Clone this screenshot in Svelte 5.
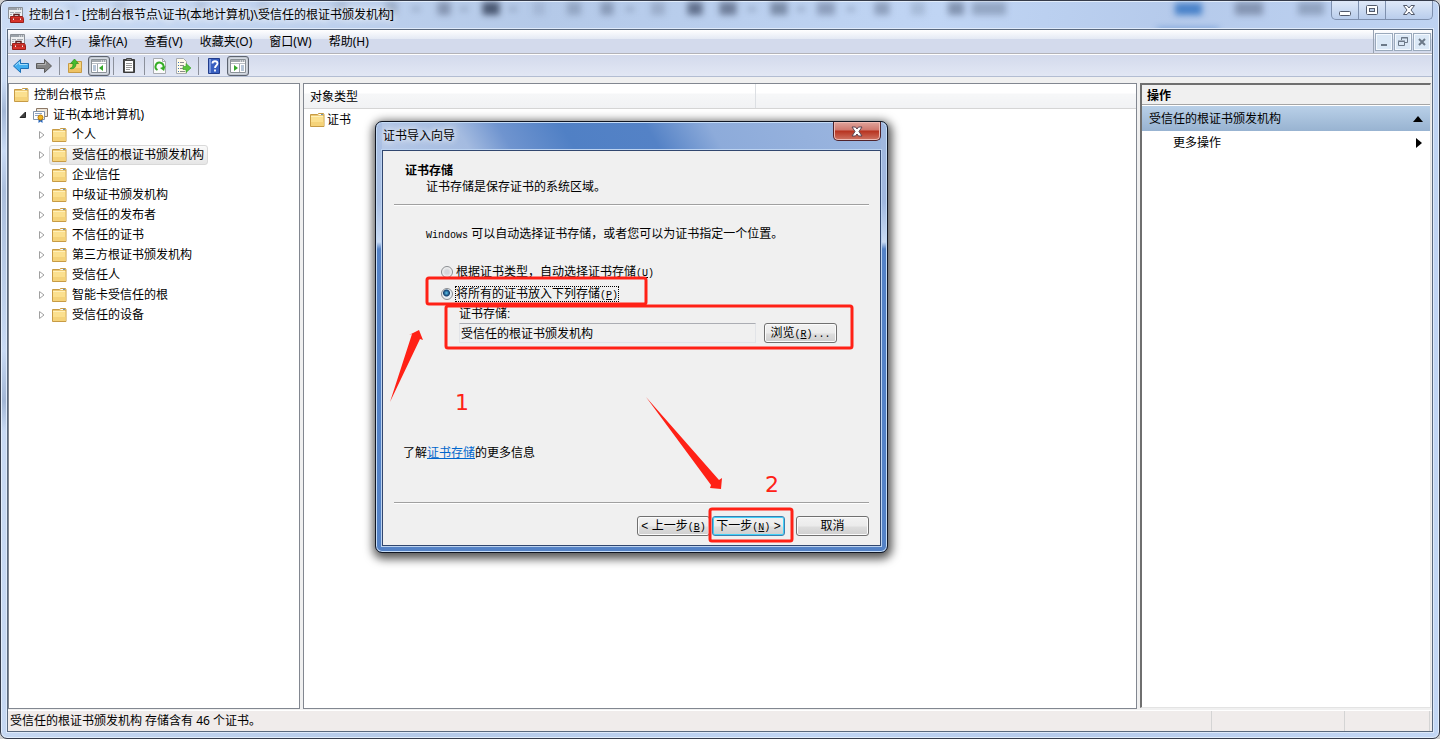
<script>
  const menus = ['文件(F)', '操作(A)', '查看(V)', '收藏夹(O)', '窗口(W)', '帮助(H)'];

  const stores = [
    '个人',
    '受信任的根证书颁发机构',
    '企业信任',
    '中级证书颁发机构',
    '受信任的发布者',
    '不信任的证书',
    '第三方根证书颁发机构',
    '受信任人',
    '智能卡受信任的根',
    '受信任的设备'
  ];

  let selected = $state('受信任的根证书颁发机构');
  let placement = $state('manual');

  // Shapes of the window behind, seen through the glass title bar.
  const ghosts = [
    [70, 8, 0.2], [120, 14, 0.15], [200, 12, 0.15], [262, 10, 0.15], [340, 14, 0.2], [390, 12, 0.3],
    [415, 7, 0.35], [443, 13, 0.45], [463, 7, 0.35], [490, 17, 0.95], [512, 7, 0.35], [538, 12, 0.15],
    [573, 14, 0.3], [606, 13, 0.4], [629, 8, 0.35], [657, 14, 0.25], [694, 15, 0.75], [727, 17, 0.65],
    [751, 8, 0.35], [778, 17, 0.55], [800, 8, 0.35], [825, 18, 0.4], [850, 8, 0.35], [881, 15, 0.4],
    [917, 14, 0.2], [955, 16, 0.5], [988, 34, 0.35], [1248, 28, 0.45], [1310, 26, 0.35]
  ];
</script>

{#snippet folder()}
  <svg class="icon" viewBox="0 0 16 16" aria-hidden="true">
    <path d="M1.5 2.500h7l1-1h5l.5 1v12h-13.500z" fill="#ecc873" stroke="#c79b45" />
    <path d="M9.500 2.500h3" stroke="#fff" />
    <path d="M12 2.500h2" stroke="#6a94b8" />
    <path d="M2 4h12.500v10H2z" fill="#fbe08f" />
    <path d="M2 10h12.500v4H2z" fill="#f5d37a" />
    <path d="M2 4.500h12" stroke="#fff0b8" />
  </svg>
{/snippet}

{#snippet toolbox()}
  <svg class="icon" viewBox="0 0 16 16" aria-hidden="true">
    <path d="M.5.5h14v11H.5z" fill="#eef0f2" stroke="#8a9097" />
    <path d="M1 1h13v2H1z" fill="#9aa1a9" />
    <path d="M9 2h1M11 2h1M13 2h1" stroke="#fff" />
    <path d="M2 5.500h4M7 5.500h6M2 7.500h2" stroke="#a5abb2" />
    <path d="M6 9V7.500h5V9" fill="none" stroke="#5b2020" stroke-width="1.500" />
    <path d="M2.500 9.500h12l1 2v4h-13z" fill="#d8342c" stroke="#98201b" />
    <path d="M3 12h12" stroke="#a3211b" />
    <path d="M5 11.500h1v1.500H5zM12 11.500h1v1.500h-1z" fill="#eee" />
  </svg>
{/snippet}

{#snippet consolePane(flip)}
  <svg class="icon wide" viewBox="0 0 18 16" aria-hidden="true">
    <path d="M1.500 1.500h15v13h-15z" fill="#fff" stroke="#8b9298" />
    <path d="M2 2h14v2H2z" fill="#a3a9af" />
    <path d="M11 3h1M13 3h1M15 3h1" stroke="#fff" />
    <path d="M2 5.500h14" stroke="#b9bec4" />
    {#if flip}
      <path d="M10.500 6v8" stroke="#a3a9af" />
      <path d="M12 8h3M12 10h3M12 12h3" stroke="#6f8db0" />
      <path d="M5 7v6l4-3z" fill="#35a82b" />
    {:else}
      <path d="M7.500 6v8" stroke="#a3a9af" />
      <path d="M3 8h3M3 10h3M3 12h3" stroke="#6f8db0" />
      <path d="M13 7v6l-4-3z" fill="#35a82b" />
    {/if}
  </svg>
{/snippet}

<div class="window">
  <svg class="ghosts" aria-hidden="true">
    {#each ghosts as [x, w, opacity]}
      <rect x={x - w / 2} y={w < 9 ? 6 : 1} width={w} height={w < 9 ? 4 : 13} fill="#46536d" {opacity} />
    {/each}
    <rect x="1174" y="2" width="27" height="12" fill="#2469bd" opacity=".75" />
    <rect x="1156" y="27" width="62" height="3" fill="#2469bd" opacity=".6" />
  </svg>

  <header class="titlebar">
    {@render toolbox()}
    <h1>控制台1 - [控制台根节点\证书(本地计算机)\受信任的根证书颁发机构]</h1>
    <div class="caption">
      <button aria-label="最小化">
        <svg width="14" height="14" viewBox="0 0 14 14"><rect x="1.500" y="8.500" width="11" height="4" rx="1" fill="#fff" stroke="#525a6b" /></svg>
      </button>
      <button aria-label="最大化">
        <svg width="14" height="14" viewBox="0 0 14 14">
          <rect x="1.500" y="2.500" width="11" height="9" rx="1" fill="#fff" stroke="#525a6b" />
          <rect x="4.500" y="5.500" width="5" height="3" fill="#b9cbe6" stroke="#525a6b" />
        </svg>
      </button>
      <button class="last" aria-label="关闭">
        <svg width="14" height="14" viewBox="0 0 14 14"><path d="M1.500 2.500h3.500l2 2.500 2-2.500h3.500l-3.500 4.500 3.500 4.500H9l-2-2.500-2 2.500H1.500l3.500-4.500z" fill="#fff" stroke="#525a6b" /></svg>
      </button>
    </div>
  </header>

  <div class="client">
    <nav class="menubar">
      {@render toolbox()}
      {#each menus as menu}
        <button class="menu">{menu}</button>
      {/each}
      <div class="mdi">
        <button aria-label="最小化子窗口">
          <svg width="12" height="12" viewBox="0 0 12 12"><path d="M3 9h6" stroke="#6c7988" stroke-width="2" /></svg>
        </button>
        <button aria-label="还原子窗口">
          <svg width="12" height="12" viewBox="0 0 12 12" fill="none" stroke="#6c7988"><path d="M4.500 4V1.500h6v5H8M4 2h7M1.500 5.500h6v4h-6zM1 5h7" /></svg>
        </button>
        <button aria-label="关闭子窗口">
          <svg width="12" height="12" viewBox="0 0 12 12"><path d="M3 3l6 6M9 3l-6 6" stroke="#6c7988" stroke-width="2" /></svg>
        </button>
      </div>
    </nav>

    <div class="toolbar">
      <button aria-label="后退">
        <svg class="icon" viewBox="0 0 16 16"><path d="M.5 8L7.500 1.500v4h8v5h-8v4z" fill="#42aef0" stroke="#1c6fb6" /><path d="M2.500 7.500L6.500 4v2.500h8" fill="none" stroke="#a5ddfb" /></svg>
      </button>
      <button aria-label="前进">
        <svg class="icon" viewBox="0 0 16 16"><path d="M15.500 8L8.500 1.500v4h-8v5h8v4z" fill="#858585" stroke="#5b5b5b" /><path d="M1.500 6.500h8V4" fill="none" stroke="#b5b5b5" /></svg>
      </button>
      <span class="sep"></span>
      <button aria-label="上一级">
        <svg class="icon" viewBox="0 0 16 16">
          <path d="M1.500 5.500h6l1.500-2h5.500v11h-13z" fill="#f6d67f" stroke="#c79b45" />
          <path d="M2 10h12v4H2z" fill="#eec263" />
          <path d="M3 10.500c2.500-1 3-2 3-5H3.500L7.500 1l4 4.500H9c0 4-2.500 6-6 5z" fill="#45bd2f" stroke="#258d1c" stroke-width=".7" />
        </svg>
      </button>
      <button class="pressed" aria-label="显示/隐藏控制台树">{@render consolePane(false)}</button>
      <span class="sep near"></span>
      <button aria-label="粘贴">
        <svg class="icon" viewBox="0 0 16 16">
          <path d="M2.500 1.500h11v13h-11z" fill="#4b4b4b" stroke="#3a3a3a" />
          <path d="M4 3h8v10.500H4z" fill="#fff" />
          <path d="M5.500.500h5v2h-5z" fill="#888" stroke="#444" />
          <path d="M5 5.500h6M5 7.500h6M5 9.500h6M5 11.500h4" stroke="#999" />
        </svg>
      </button>
      <span class="sep"></span>
      <button aria-label="刷新">
        <svg class="icon" viewBox="0 0 16 16">
          <path d="M1.500.500h9l3 3v12h-12z" fill="#fbfbfb" stroke="#a7abb0" />
          <path d="M10.500.500v3h3" fill="none" stroke="#a7abb0" />
          <path d="M5.500 12A4 4 0 1 1 11.500 9" fill="none" stroke="#36ad27" stroke-width="2" />
          <path d="M13.500 8l-1.500 5-4-3z" fill="#36ad27" />
        </svg>
      </button>
      <button aria-label="导出列表">
        <svg class="icon" viewBox="0 0 16 16">
          <path d="M1.500.500h7l3 3v12h-10z" fill="#fffbe9" stroke="#a7abb0" />
          <path d="M3 4.500h1M3 7.500h1M3 10.500h1M3 13.500h1" stroke="#3c71ba" />
          <path d="M5 4.500h4M5 7.500h4M5 10.500h3M5 13.500h5" stroke="#8b8b8b" />
          <path d="M8 8.500h3v-3l5 4.500-5 4.500v-3H8z" fill="#5ac63c" stroke="#329d23" stroke-width=".6" />
        </svg>
      </button>
      <span class="sep"></span>
      <button aria-label="帮助">
        <svg class="icon" viewBox="0 0 16 16">
          <path d="M2.500.500h11v15h-11z" fill="#385fc0" stroke="#213c8b" />
          <path d="M3 1h2v14H3z" fill="#7896dd" />
          <path d="M6.500 5.500c0-3 5-3 5 0 0 2-2.500 2-2.500 4.500M9 11.500v2" fill="none" stroke="#fff" stroke-width="1.800" />
        </svg>
      </button>
      <button class="pressed" aria-label="显示/隐藏操作窗格">{@render consolePane(true)}</button>
    </div>

    <main class="panes">
      <section class="tree" aria-label="控制台树">
        <div class="row">{@render folder()}<span>控制台根节点</span></div>
        <div class="row level1">
          <svg class="twist" viewBox="0 0 8 8"><path d="M1 6.500h5.500V1z" fill="#404040" stroke="#262626" /></svg>
          <svg class="icon" viewBox="0 0 16 16" aria-hidden="true">
            <path d="M4.500 1.500h11v8h-11z" fill="#efe7da" stroke="#8b7765" />
            <path d="M1.500 4.500h11v8h-11z" fill="#fff" stroke="#8394aa" />
            <path d="M3 6.500h7M3 8.500h4" stroke="#8fa4c5" />
            <path d="M6.500 11v5l2-1.500 2 1.500v-5z" fill="#2766bd" />
            <circle cx="8.500" cy="10.500" r="2.500" fill="#efb51d" stroke="#bb7b0b" />
          </svg>
          <span>证书(本地计算机)</span>
        </div>
        {#each stores as store}
          <div class="row level2">
            <svg class="twist" viewBox="0 0 8 8"><path d="M1.500.500v7L6 4z" fill="#fff" stroke="#a0a0a0" /></svg>
            <button class="node" class:selected={selected === store} onclick={() => (selected = store)}>
              {@render folder()}<span>{store}</span>
            </button>
          </div>
        {/each}
      </section>

      <section class="list">
        <table>
          <thead>
            <tr><th class="type">对象类型</th><th></th></tr>
          </thead>
          <tbody>
            <tr><td><span class="cell">{@render folder()}证书</span></td><td></td></tr>
          </tbody>
        </table>
      </section>

      <aside class="actions">
        <h2>操作</h2>
        <button class="group">受信任的根证书颁发机构
          <svg width="10" height="6" viewBox="0 0 10 6"><path d="M0 6L5 0l5 6z" /></svg>
        </button>
        <button class="more">更多操作
          <svg width="6" height="10" viewBox="0 0 6 10"><path d="M0 0l6 5-6 5z" /></svg>
        </button>
      </aside>
    </main>

    <footer class="status">
      <span class="message">受信任的根证书颁发机构 存储含有 46 个证书。</span>
      <span class="slot"></span>
      <span class="slot small"></span>
    </footer>
  </div>

  <div class="wizard" role="dialog" aria-labelledby="wizard-title">
    <div class="wizard-bar">
      <span id="wizard-title">证书导入向导</span>
      <button class="wizard-close" aria-label="关闭向导">
        <svg width="12" height="11" viewBox="0 0 12 11"><path d="M1 1h3.500L6 3l1.500-2H11L8 5.500l3 4.500H7.500L6 8l-1.500 2H1l3-4.500z" fill="#fff" stroke="#5a4350" /></svg>
      </button>
    </div>
    <form class="wizard-page" onsubmit={(e) => e.preventDefault()}>
      <h2>证书存储</h2>
      <p class="sub">证书存储是保存证书的系统区域。</p>
      <hr />
      <p class="intro"><i>Windows</i> 可以自动选择证书存储，或者您可以为证书指定一个位置。</p>
      <label class="choice first">
        <input type="radio" name="placement" value="auto" bind:group={placement} />
        <span>根据证书类型，自动选择证书存储<i>(<u>U</u>)</i></span>
      </label>
      <label class="choice">
        <input type="radio" name="placement" value="manual" bind:group={placement} />
        <span>将所有的证书放入下列存储<i>(<u>P</u>)</i></span>
      </label>
      <div class="store">
        <label for="store-name">证书存储:</label>
        <div class="store-row">
          <input id="store-name" type="text" readonly value={selected} />
          <button type="button">浏览<i>(<u>R</u>)...</i></button>
        </div>
      </div>
      <p class="learn">了解<a href="#stores">证书存储</a>的更多信息</p>
      <hr />
      <div class="buttons">
        <button type="button">&lt; 上一步<i>(<u>B</u>)</i></button>
        <button class="default">下一步<i>(<u>N</u>)</i> &gt;</button>
        <button type="button" class="cancel">取消</button>
      </div>
    </form>

    <!-- Red step marks drawn over the wizard -->
    <svg class="marks" viewBox="0 0 512 432">
      <g fill="none" stroke="#ff2116" stroke-width="3">
        <rect x="51" y="156" width="219" height="26" rx="2" />
        <rect x="70" y="184" width="406" height="42" rx="2" />
        <rect x="334" y="387" width="82" height="32" rx="2" />
      </g>
      <path d="M14 280L36 212l-3 1 10-5 4 10-3-1z" fill="#ff2116" />
      <path d="M270 275L335 363l-1 3 11 1 1-11-3 2z" fill="#ff2116" />
      <text x="79" y="288">1</text>
      <text x="389" y="370">2</text>
    </svg>
  </div>
</div>

<style>
  :global(body) {
    background: #d0d0d0;
  }

  .window {
    --ui: "Noto Sans", "Noto Sans CJK SC", sans-serif;
    position: relative;
    box-sizing: border-box;
    min-height: 100vh;
    display: flex;
    flex-direction: column;
    padding: 0 6px 6px;
    border: 1px solid #353b4a;
    border-radius: 7px;
    background:
      linear-gradient(#8b9dbd00 80px, #56709a55 110px, #d6e4f800 150px, #56709a44 190px, #d6e4f800 350px, #56709a55 400px, #d6e4f800 430px) left / 7px 100% no-repeat,
      linear-gradient(100deg, #cbdcf5, #b4c9e8 35%, #c0d5f4 60%, #b5caeb 75%, #c3d7f5);
    box-shadow: inset 0 0 0 1px #e2edfb;
    overflow: hidden;
    font: 12px/16px var(--ui);
    color: #000;
  }

  button {
    padding: 0;
    border: none;
    background: none;
    font: inherit;
    color: inherit;
  }

  h1, h2, p {
    margin: 0;
    font-size: 12px;
    font-weight: 400;
  }

  .icon {
    width: 16px;
    height: 16px;
    flex-shrink: 0;
  }

  .wide {
    width: 18px;
  }

  /* Title bar */

  .ghosts {
    position: absolute;
    top: 0;
    left: 0;
    width: 100%;
    height: 30px;
    filter: blur(3px);
  }

  .titlebar {
    position: relative;
    display: flex;
    align-items: center;
    gap: 5px;
    height: 28px;
    padding-left: 1px;
  }

  .titlebar h1 {
    flex: 1;
    white-space: nowrap;
    text-shadow: 0 0 6px #fff, 0 0 10px #fff;
  }

  .caption {
    display: flex;
    align-self: flex-start;
    height: 18px;
    border: 1px solid #7e90ae;
    border-top: none;
    border-radius: 0 0 5px 5px;
    background: linear-gradient(#dfe9f8, #b9cdec);
  }

  .caption button {
    display: grid;
    place-items: center;
    width: 27px;
    border-right: 1px solid #7e90ae;
  }

  .caption .last {
    width: 46px;
    border-right: none;
  }

  /* Client area */

  .client {
    position: relative;
    flex: 1;
    display: flex;
    flex-direction: column;
    border: 1px solid #59687d;
    background: #f0f0f0;
    outline: 1px solid #dfeafa;
  }

  .menubar {
    display: flex;
    align-items: center;
    gap: 17px;
    height: 23px;
    padding-left: 2px;
    border-bottom: 1px solid #b3b3b8;
    background: linear-gradient(#fff, #e4e9f4 9px, #d3daec 9px);
  }

  .menubar > .icon {
    margin-right: -9px;
  }

  .mdi {
    display: flex;
    gap: 1px;
    align-items: center;
    align-self: stretch;
    margin-left: auto;
    padding: 0 1px;
    border-left: 1px solid #98a3b3;
  }

  .mdi button {
    display: grid;
    place-items: center;
    box-sizing: border-box;
    width: 18px;
    height: 18px;
    border: 1px solid #9aa9bb;
    background: #dbe8f6;
    box-shadow: inset 0 0 0 1px #f4f9ff;
  }

  .toolbar {
    display: flex;
    align-items: center;
    gap: 7px;
    height: 21px;
    padding-left: 5px;
    border-top: 1px solid #fff;
    border-bottom: 1px solid #b3bdd2;
    background: linear-gradient(#d3daec, #e2e7f4);
  }

  .toolbar button {
    display: grid;
    place-items: center;
  }

  .toolbar .pressed {
    box-sizing: border-box;
    width: 22px;
    height: 20px;
    margin: 0 -2px;
    border: 1px solid #5d6470;
    border-radius: 3px;
    background: #dce0e8;
    box-shadow: inset 0 0 2px #7c8490;
  }

  .sep {
    width: 1px;
    height: 18px;
    background: #8b909b;
  }

  .sep.near {
    margin-left: -2px;
  }

  .panes {
    flex: 1;
    display: flex;
    gap: 3px;
    padding-top: 6px;
  }

  /* Console tree */

  .tree,
  .list {
    box-sizing: border-box;
    border: 1px solid #828790;
    background: #fff;
  }

  .tree {
    width: 292px;
    padding: 1px 4px;
  }

  .row {
    display: flex;
    align-items: center;
    gap: 5px;
    height: 20px;
  }

  .level1 {
    padding-left: 6px;
  }

  .level2 {
    gap: 3px;
    padding-left: 25px;
  }

  .twist {
    width: 8px;
    height: 8px;
  }

  .node {
    display: flex;
    align-items: center;
    gap: 5px;
    height: 20px;
    padding: 0 3px 0 1px;
    border: 1px solid transparent;
    border-radius: 3px;
    box-sizing: border-box;
  }

  .node.selected {
    border-color: #d9d9d9;
    background: linear-gradient(#fafafa, #e6e6e6);
  }

  /* Object list */

  .list {
    flex: 1;
  }

  table {
    width: 100%;
    border-collapse: collapse;
    table-layout: fixed;
  }

  th {
    box-sizing: border-box;
    height: 24px;
    padding: 3px 6px 0;
    border-bottom: 1px solid #d5d5d5;
    background: linear-gradient(#fff 9px, #f6f7f8 10px, #f1f2f4);
    font-weight: 400;
    text-align: left;
  }

  .type {
    width: 451px;
    border-right: 1px solid #dcdfe3;
  }

  td {
    height: 22px;
    padding: 0 5px;
  }

  .cell {
    display: flex;
    align-items: center;
    gap: 2px;
  }

  /* Actions pane */

  .actions {
    box-sizing: border-box;
    width: 291px;
    margin: 0 1px 1px 0;
    border: 1px solid #e3e3e3;
    border-top: 2px solid #6f6f6f;
    border-left: 2px solid #6f6f6f;
    background: #fff;
  }

  .actions h2 {
    height: 16px;
    padding: 3px 4px 0 5px;
    border-bottom: 1px solid #a5a5a5;
    background: #f0f0f0;
    font-weight: 700;
  }

  .actions button {
    display: flex;
    align-items: center;
    justify-content: space-between;
    width: 100%;
    height: 25px;
  }

  .actions .group {
    margin-top: 1px;
    padding: 0 7px;
    background: linear-gradient(#b9d0e8, #98b3d1);
  }

  .actions .more {
    height: 23px;
    padding: 0 8px 0 31px;
  }

  /* Status bar */

  .status {
    display: flex;
    height: 20px;
    margin-top: 1px;
    border-top: 1px solid #fff;
    background: #f0eceb;
  }

  .message {
    flex: 1;
    padding: 2px 2px 0;
  }

  .slot {
    width: 132px;
    border-left: 1px solid #d4d4d4;
  }

  .slot.small {
    width: 84px;
    margin-right: 2px;
    border-right: 1px solid #d4d4d4;
  }

  /* Import wizard */

  .wizard {
    position: absolute;
    top: 120px;
    left: 374px;
    box-sizing: border-box;
    width: 513px;
    height: 432px;
    display: flex;
    flex-direction: column;
    padding: 0 6px 6px;
    border: 1px solid #101623;
    border-radius: 7px;
    background:
      linear-gradient(#a9bfe3 80px, #c9dbf3 120px, #c9dbf300 127px) left / 6px 100% no-repeat,
      linear-gradient(#a0b8df 80px, #c9dbf3 120px, #c9dbf300 127px) right / 6px 100% no-repeat,
      linear-gradient(60deg, #b8cae8, #a4bbe0 18%, #6f94cf 26%, #5080c5 38%, #5482c6 54%, #8dabda 66%, #9db7e0) top / 100% 30px no-repeat,
      #5482c6;
    box-shadow: inset 0 0 0 1px #c5dcf7, 1px 3px 10px 3px #000000a8;
  }

  .wizard-bar {
    display: flex;
    align-items: center;
    justify-content: space-between;
    height: 28px;
    padding-left: 1px;
    text-shadow: 0 0 7px #fff, 0 0 7px #fff;
  }

  .wizard-close {
    display: grid;
    place-items: center;
    align-self: flex-start;
    box-sizing: border-box;
    width: 48px;
    height: 19px;
    border: 1px solid #50232b;
    border-top: none;
    border-radius: 0 0 5px 5px;
    background: linear-gradient(#dfa49c, #cf786e 8px, #b7321f 9px, #cf7564);
    box-shadow: inset 0 0 0 1px #edbab3;
  }

  .wizard-page {
    flex: 1;
    display: flex;
    flex-direction: column;
    padding: 12px 11px 9px;
    border: 1px solid #31476f;
    outline: 1px solid #bcd3f1;
    background: #f0f0f0;
    font-family: "Liberation Sans", "Noto Sans CJK SC", sans-serif;
  }

  .wizard-page h2 {
    padding-left: 11px;
    font-weight: 700;
  }

  /* Half-width Latin beside the full-width characters */
  i {
    font: 10px/12px "Liberation Mono", monospace;
  }

  .sub {
    padding-left: 32px;
  }

  hr {
    box-sizing: border-box;
    width: 100%;
    height: 2px;
    margin: 9px 0 0;
    border: none;
    border-top: 1px solid #a0a0a0;
    border-bottom: 1px solid #fff;
  }

  .intro {
    margin-top: 20px;
    padding-left: 32px;
  }

  .choice {
    display: flex;
    align-items: center;
    gap: 3px;
    height: 16px;
    margin-top: 6px;
    padding-left: 47px;
  }

  .choice.first {
    margin-top: 22px;
  }

  .choice input {
    appearance: none;
    box-sizing: border-box;
    width: 12px;
    height: 12px;
    margin: 0;
    border: 1px solid #8a8d91;
    border-radius: 50%;
    background: radial-gradient(circle, #d5d8dc 2px, #f4f4f4 5px);
  }

  .choice input:checked {
    background: radial-gradient(circle at 45% 40%, #5cc4ee, #123f6e 3px, #e8eef3 4px);
  }

  .choice span {
    height: 14px;
    line-height: 14px;
    border: 1px dotted transparent;
    margin-left: -1px;
  }

  .choice input:checked + span {
    border-color: #000;
  }

  .store {
    margin-top: 4px;
    padding-left: 65px;
  }

  .store label {
    display: block;
  }

  .store-row {
    display: flex;
    gap: 8px;
    margin-top: 1px;
  }

  .store-row input {
    box-sizing: border-box;
    width: 297px;
    height: 20px;
    padding: 0 1px 2px;
    border: 1px solid #e2e4e8;
    border-top-color: #abadb3;
    background: #f0f0f0;
    font: inherit;
    outline: none;
  }

  .wizard-page button {
    box-sizing: border-box;
    width: 73px;
    height: 20px;
    border: 1px solid #707070;
    border-radius: 3px;
    background: linear-gradient(#f2f2f2, #ebebeb 9px, #dddddd 10px, #cfcfcf);
    box-shadow: inset 0 0 0 1px #fbfbfb;
    white-space: nowrap;
    line-height: 16px;
  }

  .wizard-page .default {
    border-color: #3c7fb1;
    box-shadow: inset 0 0 0 1px #43d1f7;
  }

  .learn {
    margin-top: auto;
    padding: 0 0 32px 9px;
  }

  .learn a {
    color: #0066cc;
  }

  .buttons {
    display: flex;
    justify-content: flex-end;
    gap: 2px;
    padding-top: 12px;
  }

  .cancel {
    margin-left: 9px;
  }

  .marks {
    position: absolute;
    top: 0;
    left: 0;
    width: 512px;
    height: 432px;
    pointer-events: none;
  }

  .marks text {
    fill: #ff2116;
    font: 22px "DejaVu Sans", sans-serif;
  }
</style>
